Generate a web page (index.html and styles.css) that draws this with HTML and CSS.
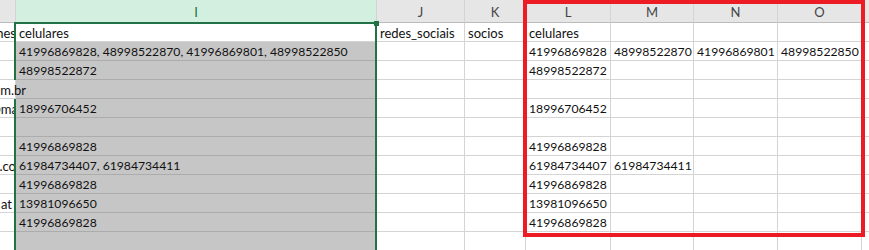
FILE: index.html
```html
<!DOCTYPE html>
<html lang="pt">
<head>
<meta charset="utf-8">
<title>Planilha - celulares</title>
<link rel="stylesheet" href="styles.css">
</head>
<body>
<div class="wrap">
  <div class="sheet">
    <!-- column headers -->
    <div class="cell hdr"></div>
    <div class="cell hdr hdr-sel">I</div>
    <div class="cell hdr">J</div>
    <div class="cell hdr">K</div>
    <div class="cell hdr">L</div>
    <div class="cell hdr">M</div>
    <div class="cell hdr">N</div>
    <div class="cell hdr">O</div>
    <div class="cell hdr"></div>

    <!-- row 1 -->
    <div class="cell tail txt"><span class="t end-1">telefones</span></div>
    <div class="cell active txt">celulares</div>
    <div class="cell txt">redes_sociais</div>
    <div class="cell txt">socios</div>
    <div class="cell txt">celulares</div>
    <div class="cell"></div><div class="cell"></div><div class="cell"></div><div class="cell"></div>

    <!-- row 2 -->
    <div class="cell tail"></div>
    <div class="cell sel">41996869828, 48998522870, 41996869801, 48998522850</div>
    <div class="cell"></div><div class="cell"></div>
    <div class="cell">41996869828</div>
    <div class="cell">48998522870</div>
    <div class="cell">41996869801</div>
    <div class="cell">48998522850</div>
    <div class="cell"></div>

    <!-- row 3 -->
    <div class="cell tail"></div>
    <div class="cell sel">48998522872</div>
    <div class="cell"></div><div class="cell"></div>
    <div class="cell">48998522872</div>
    <div class="cell"></div><div class="cell"></div><div class="cell"></div><div class="cell"></div>

    <!-- row 4: text spills over the empty cell on its right -->
    <div class="cell tail txt spill"><span class="t end-11">contato@empresa.com.br</span></div>
    <div class="cell sel"></div>
    <div class="cell"></div><div class="cell"></div><div class="cell"></div>
    <div class="cell"></div><div class="cell"></div><div class="cell"></div><div class="cell"></div>

    <!-- row 5 -->
    <div class="cell tail txt"><span class="t end-3">contato@ma</span></div>
    <div class="cell sel">18996706452</div>
    <div class="cell"></div><div class="cell"></div>
    <div class="cell">18996706452</div>
    <div class="cell"></div><div class="cell"></div><div class="cell"></div><div class="cell"></div>

    <!-- row 6 -->
    <div class="cell tail"></div>
    <div class="cell sel"></div>
    <div class="cell"></div><div class="cell"></div><div class="cell"></div>
    <div class="cell"></div><div class="cell"></div><div class="cell"></div><div class="cell"></div>

    <!-- row 7 -->
    <div class="cell tail"></div>
    <div class="cell sel">41996869828</div>
    <div class="cell"></div><div class="cell"></div>
    <div class="cell">41996869828</div>
    <div class="cell"></div><div class="cell"></div><div class="cell"></div><div class="cell"></div>

    <!-- row 8 -->
    <div class="cell tail txt"><span class="t end-1">site.co</span></div>
    <div class="cell sel">61984734407, 61984734411</div>
    <div class="cell"></div><div class="cell"></div>
    <div class="cell">61984734407</div>
    <div class="cell">61984734411</div>
    <div class="cell"></div><div class="cell"></div><div class="cell"></div>

    <!-- row 9 -->
    <div class="cell tail"></div>
    <div class="cell sel">41996869828</div>
    <div class="cell"></div><div class="cell"></div>
    <div class="cell">41996869828</div>
    <div class="cell"></div><div class="cell"></div><div class="cell"></div><div class="cell"></div>

    <!-- row 10 -->
    <div class="cell tail txt"><span class="t end3">at</span></div>
    <div class="cell sel">13981096650</div>
    <div class="cell"></div><div class="cell"></div>
    <div class="cell">13981096650</div>
    <div class="cell"></div><div class="cell"></div><div class="cell"></div><div class="cell"></div>

    <!-- row 11 -->
    <div class="cell tail"></div>
    <div class="cell sel">41996869828</div>
    <div class="cell"></div><div class="cell"></div>
    <div class="cell">41996869828</div>
    <div class="cell"></div><div class="cell"></div><div class="cell"></div><div class="cell"></div>

    <!-- row 12 -->
    <div class="cell tail"></div>
    <div class="cell sel"></div>
    <div class="cell"></div><div class="cell"></div><div class="cell"></div>
    <div class="cell"></div><div class="cell"></div><div class="cell"></div><div class="cell"></div>
  </div>

  <!-- selection outline of column I -->
  <div class="selection"></div>
  <div class="handle"></div>

  <!-- highlight box around columns L:O -->
  <div class="mark"></div>
</div>
</body>
</html>
```

FILE: styles.css
```css
* {
  box-sizing: border-box;
}

html, body {
  margin: 0;
  padding: 0;
  background: #ffffff;
  overflow: hidden;
}

.wrap {
  position: relative;
  width: 869px;
  height: 250px;
  overflow: hidden;
}

.sheet {
  display: grid;
  grid-template-columns: 16px 361px 88px 61px 85px 83px 84px 84px 20px;
  grid-template-rows: 23px;
  grid-auto-rows: 19px;
  font-family: Lato, "Liberation Sans", sans-serif;
  font-size: 12.2px;
  color: #111111;
}

.cell {
  border-right: 1px solid #d4d4d4;
  border-bottom: 1px solid #d4d4d4;
  background: #ffffff;
  padding: 1px 0 0 3px;
  line-height: 18px;
  white-space: nowrap;
  overflow: hidden;
}

/* words are set a little larger than the phone numbers */
.txt {
  font-size: 13px;
}

.hdr {
  background: #e6e6e6;
  color: #444444;
  font-size: 13px;
  border-bottom-color: #bcbcbc;
  text-align: center;
  padding: 2px 0 0 0;
  line-height: 20px;
}

.hdr-sel {
  background: #d3efdf;
  color: #217346;
}

.active {
  background: #ffffff;
}

.sel {
  background: #c6c6c6;
  border-bottom-color: #acacac;
}

/* left column: only the tail end of longer texts is visible */
.tail {
  padding: 1px 0 0 0;
  display: flex;
  justify-content: flex-end;
  overflow: visible;
}

.tail .t {
  flex: none;
}

.end-1 {
  margin-right: -1px;
}

.end-3 {
  margin-right: -3px;
}

.end-11 {
  margin-right: -11px;
}

.end3 {
  margin-right: 3px;
}

.spill {
  z-index: 1;
}

.selection {
  position: absolute;
  left: 14px;
  top: 22px;
  width: 363px;
  height: 240px;
  border: 2px solid #217346;
  border-bottom: none;
}

.handle {
  position: absolute;
  left: 374px;
  top: 21px;
  width: 5px;
  height: 5px;
  background: #217346;
}

.mark {
  position: absolute;
  left: 523px;
  top: 0;
  width: 342px;
  height: 237px;
  border: 4px solid #ed1c24;
}
```
